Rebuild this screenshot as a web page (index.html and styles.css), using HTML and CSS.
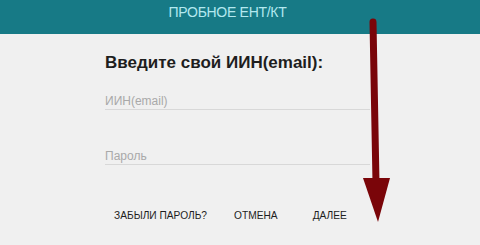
FILE: index.html
```html
<!DOCTYPE html>
<html lang="ru">
<head>
<meta charset="utf-8">
<link rel="stylesheet" href="styles.css">
</head>
<body>
<header class="topbar"><span class="topbar-title">ПРОБНОЕ ЕНТ/КТ</span></header>
<main class="dialog">
  <h1 class="dialog-title">Введите свой ИИН(email):</h1>
  <div class="field"><span class="placeholder">ИИН(email)</span></div>
  <div class="field"><span class="placeholder">Пароль</span></div>
  <div class="actions">
    <span class="btn">ЗАБЫЛИ ПАРОЛЬ?</span>
    <span class="btn">ОТМЕНА</span>
    <span class="btn">ДАЛЕЕ</span>
  </div>
</main>
<svg class="arrow" width="40" height="215" viewBox="0 0 40 215" aria-hidden="true">
  <path d="M10 4 L13 165" stroke="#7a0509" stroke-width="7" stroke-linecap="round" fill="none"/>
  <path d="M0 160 L27 160 L15 204 Z" fill="#7a0509"/>
</svg>
</body>
</html>
```
FILE: styles.css
```css
html, body {
  margin: 0;
  padding: 0;
  background: #f0f0f0;
  font-family: "Liberation Sans", Arial, sans-serif;
}
body {
  width: 480px;
  height: 245px;
  overflow: hidden;
  position: relative;
}
.topbar {
  height: 34px;
  background: #177a86;
  display: flex;
  justify-content: center;
  padding-right: 25px;
  box-sizing: border-box;
}
.topbar-title {
  color: #b3e8ef;
  font-size: 14px;
  letter-spacing: -0.3px;
  line-height: 24px;
}
.dialog {
  padding-left: 105px;
  width: 265px;
}
.dialog-title {
  margin: 19px 0 0;
  font-size: 17px;
  font-weight: bold;
  color: #1e1e1e;
  line-height: 20px;
}
.field {
  border-bottom: 1px solid #d8d8d8;
  height: 22px;
  display: flex;
  align-items: flex-end;
}
.field:nth-of-type(1) {
  margin-top: 14px;
}
.field + .field {
  margin-top: 32px;
}
.placeholder {
  color: #a9a9a9;
  font-size: 12px;
  line-height: 14px;
  padding-bottom: 1px;
}
.actions {
  display: flex;
  margin-top: 44px;
  padding-left: 9px;
}
.btn {
  font-size: 10.2px;
  color: #1e1e1e;
  line-height: 14px;
}
.btn + .btn {
  margin-left: 27px;
}
.btn:last-child {
  margin-left: 35px;
}
.arrow {
  position: absolute;
  left: 363px;
  top: 18px;
}
```
